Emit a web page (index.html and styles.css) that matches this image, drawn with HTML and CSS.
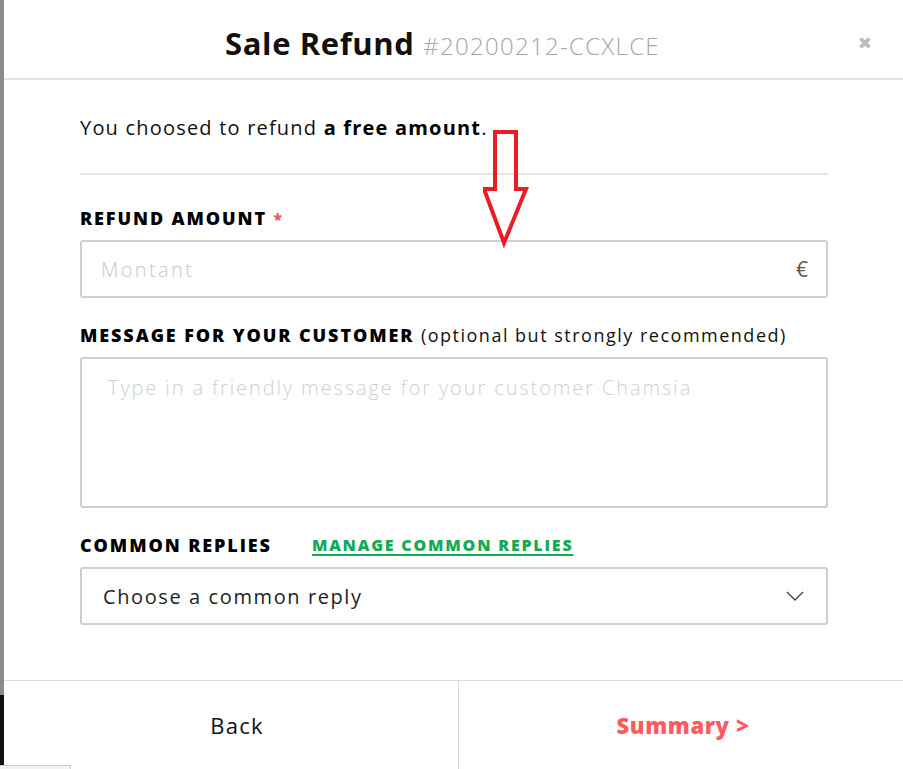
FILE: index.html
```html
<!DOCTYPE html>
<html lang="en">
<head>
<meta charset="utf-8">
<title>Sale Refund</title>
<link rel="stylesheet" href="styles.css">
</head>
<body>
<div class="page">
  <div class="strip"><div class="strip-dark"></div></div>
  <div class="modal">
    <header class="modal-header">
      <h1 class="title">Sale Refund <span class="ref">#20200212-CCXLCE</span></h1>
      <span class="close">&#10006;</span>
    </header>
    <main class="modal-body">
      <p class="intro">You choosed to refund <strong>a free amount</strong>.</p>
      <hr class="sep">
      <label class="field-label">Refund amount <span class="req">*</span></label>
      <div class="input">
        <span class="placeholder">Montant</span>
        <span class="currency">€</span>
      </div>
      <label class="field-label">Message for your customer <span class="hint">(optional but strongly recommended)</span></label>
      <div class="textarea">
        <span class="placeholder soft">Type in a friendly message for your customer Chamsia</span>
      </div>
      <div class="label-row">
        <label class="field-label">Common replies</label>
        <a class="manage" href="#">Manage common replies</a>
      </div>
      <div class="select">
        <span class="select-text">Choose a common reply</span>
        <svg class="chevron" width="18" height="10" viewBox="0 0 18 10"><path d="M1 1 L9 9 L17 1" fill="none" stroke="#444" stroke-width="1.4"/></svg>
      </div>
    </main>
    <footer class="modal-footer">
      <button class="btn back">Back</button>
      <button class="btn next">Summary &gt;</button>
    </footer>
  </div>
</div>
<svg class="arrow" width="60" height="130" viewBox="0 0 60 130">
  <polygon points="12,2 33,2 33,59 43,59 21,113 1,59 12,59" fill="none" stroke="#ea1c24" stroke-width="4" stroke-linejoin="miter"/>
</svg>
<div class="corner-box"></div>
</body>
</html>
```

FILE: styles.css
```css
* { box-sizing: border-box; }
html, body { margin: 0; padding: 0; }
body {
  font-family: "Open Sans", "DejaVu Sans", sans-serif;
  color: #111;
  background: #fff;
  width: 903px;
  height: 769px;
  overflow: hidden;
  position: relative;
}
.page { display: flex; height: 769px; }
.strip {
  width: 4px;
  background: #8b8b8b;
  display: flex;
  flex-direction: column;
  justify-content: flex-end;
  padding-bottom: 4px;
}
.strip-dark { height: 70px; background: #111; }
.modal {
  flex: 1;
  display: flex;
  flex-direction: column;
  background: #fff;
}
.modal-header {
  height: 80px;
  border-bottom: 2px solid #e3e3e3;
  display: flex;
  align-items: center;
  justify-content: center;
  position: relative;
  padding: 8px 22px 0 0;
}
.title {
  margin: 0;
  font-family: "Open Sans", sans-serif;
  font-weight: 700;
  font-size: 31px;
  color: #111;
  letter-spacing: 0.6px;
}
.ref {
  font-family: "Open Sans", sans-serif;
  font-weight: 300;
  font-size: 24px;
  color: #a6a6a6;
  letter-spacing: 1.3px;
}
.close {
  position: absolute;
  right: 31px;
  top: 31px;
  font-size: 17px;
  color: #bdbdbd;
  font-weight: bold;
}
.modal-body {
  flex: 1;
  padding: 36px 75px 0 76px;
  display: flex;
  flex-direction: column;
}
.intro {
  margin: 0;
  font-size: 20px;
  line-height: 24px;
  font-weight: 400;
  color: #111;
  letter-spacing: 1.2px;
}
.intro strong { font-weight: 700; color: #000; }
.sep {
  margin: 33px 0 0;
  border: 0;
  border-top: 2px solid #e5e5e5;
  height: 0;
}
.field-label {
  display: block;
  height: 22px;
  line-height: 22px;
  font-size: 18px;
  font-weight: 800;
  text-transform: uppercase;
  color: #000;
  letter-spacing: 1.9px;
}
.modal-body > .field-label:first-of-type { margin-top: 32px; }
.req { color: #f05a5a; font-size: 15px; }
.hint {
  text-transform: none;
  font-weight: 400;
  font-size: 18px;
  color: #111;
  letter-spacing: 1.5px;
}
.input {
  margin-top: 11px;
  height: 58px;
  border: 2px solid #cfcfcf;
  border-radius: 3px;
  display: flex;
  align-items: center;
  justify-content: space-between;
  padding: 0 18px 0 19px;
  margin-bottom: 26px;
}
.placeholder { font-size: 20px; color: #c8c8c8; font-weight: 300; letter-spacing: 2.4px; }
.placeholder.soft { color: #d0d0d0; letter-spacing: 1.9px; }
.currency { font-size: 21px; color: #555; }
.textarea {
  margin-top: 11px;
  height: 151px;
  border: 2px solid #cfcfcf;
  border-radius: 3px;
  padding: 15px 26px;
  margin-bottom: 26px;
}
.label-row {
  display: flex;
  align-items: center;
  gap: 40px;
  height: 22px;
}
.manage {
  font-size: 16px;
  font-weight: 800;
  text-transform: uppercase;
  color: #15a957;
  text-decoration: underline;
  text-decoration-thickness: 2px;
  text-underline-offset: 3px;
  letter-spacing: 1.8px;
}
.select {
  margin-top: 11px;
  height: 58px;
  border: 2px solid #cfcfcf;
  border-radius: 3px;
  display: flex;
  align-items: center;
  justify-content: space-between;
  padding: 0 22px 0 21px;
}
.select-text { font-size: 20px; color: #222; letter-spacing: 1.6px; }
.modal-footer {
  height: 89px;
  border-top: 1px solid #dcdcdc;
  display: grid;
  grid-template-columns: 455px 1fr;
}
.btn {
  border: 0;
  background: #fff;
  font-family: "Open Sans", sans-serif;
  font-size: 22px;
  cursor: pointer;
  padding: 0;
}
.back { color: #111; font-weight: 400; border-right: 1px solid #dcdcdc; padding-left: 12px; letter-spacing: 1.2px; }
.next { color: #ff5a5f; font-weight: 800; letter-spacing: 0.6px; padding-left: 4px; }
.arrow {
  position: absolute;
  left: 483px;
  top: 130px;
}
.corner-box {
  position: absolute;
  left: 0;
  bottom: 0;
  width: 71px;
  height: 4px;
  border-top: 1px solid #ccc;
  border-right: 1px solid #ccc;
  background: #f4f4f4;
}
```
